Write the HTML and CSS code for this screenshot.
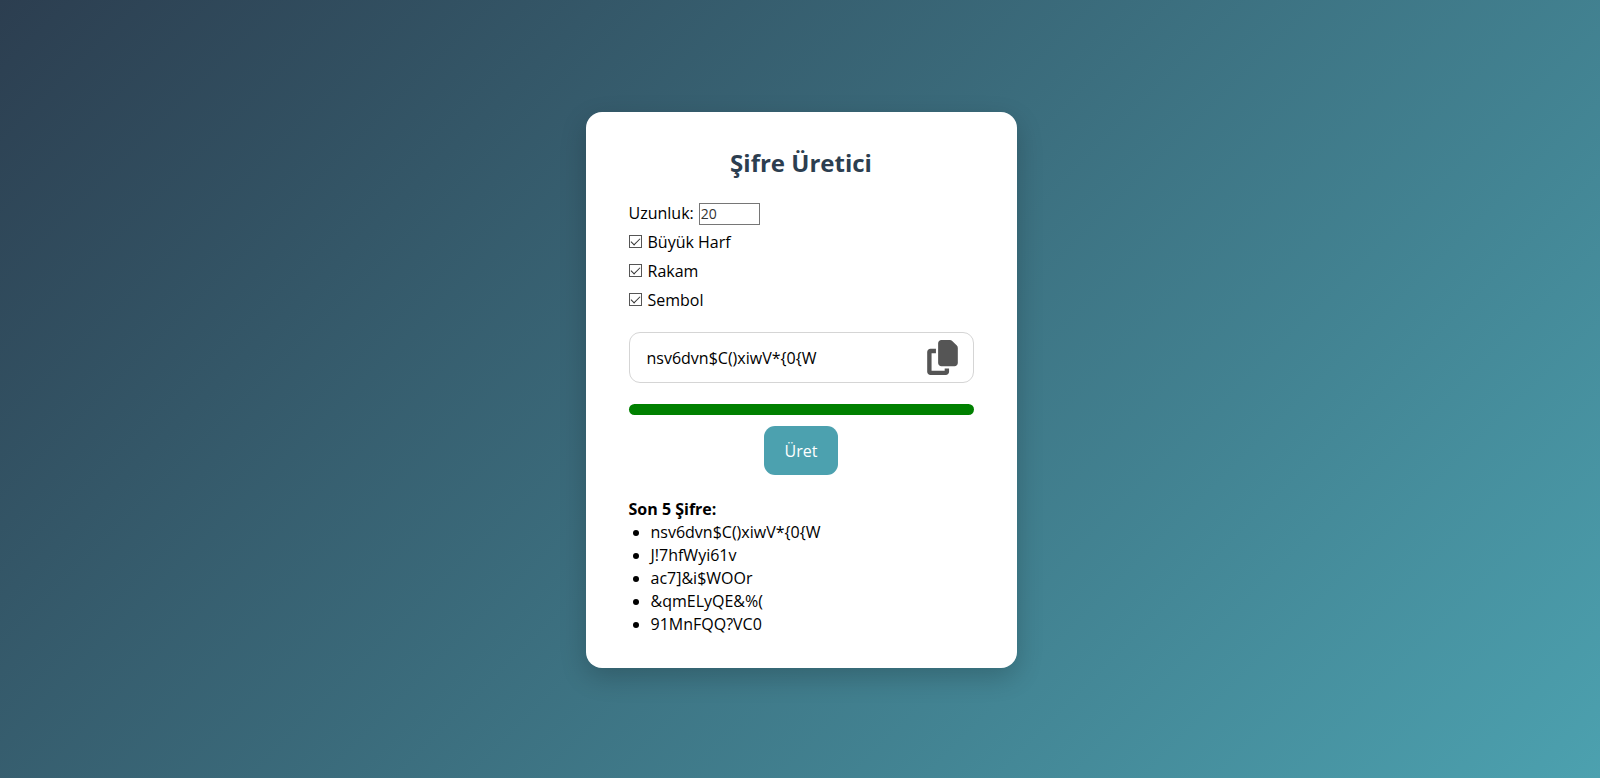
FILE: index.html
```html
<!DOCTYPE html>
<html lang="tr">
<head>
<meta charset="UTF-8">
<meta name="viewport" content="width=device-width, initial-scale=1">
<title>Şifre Üretici</title>
<link rel="stylesheet" href="styles.css">
</head>
<body>
<main class="card">
  <h1 class="title">Şifre Üretici</h1>
  <form class="generator">
    <div class="row">
      <label for="length">Uzunluk:</label>
      <input class="length" type="text" inputmode="numeric" id="length" value="20">
    </div>
    <label class="row"><input class="check" type="checkbox" checked><span>Büyük Harf</span></label>
    <label class="row"><input class="check" type="checkbox" checked><span>Rakam</span></label>
    <label class="row"><input class="check" type="checkbox" checked><span>Sembol</span></label>
    <div class="output">
      <span class="password">nsv6dvn$C()xiwV*{0{W</span>
      <button class="copy" type="button" aria-label="Kopyala">
        <svg class="copy-icon" viewBox="0 0 448 512" aria-hidden="true"><path d="M208 0H332.1c12.7 0 24.9 5.1 33.9 14.1l67.9 67.9c9 9 14.1 21.2 14.1 33.9V336c0 26.5-21.5 48-48 48H208c-26.5 0-48-21.5-48-48V48c0-26.5 21.5-48 48-48zM48 128h80v64H64V448H256V416h64v48c0 26.5-21.5 48-48 48H48c-26.5 0-48-21.5-48-48V176c0-26.5 21.5-48 48-48z"/></svg>
      </button>
    </div>
    <div class="strength"></div>
    <button class="generate" type="button">Üret</button>
  </form>
  <section class="history">
    <h2 class="history-title">Son 5 Şifre:</h2>
    <ul class="history-list">
      <li>nsv6dvn$C()xiwV*{0{W</li>
      <li>J!7hfWyi61v</li>
      <li>ac7]&amp;i$WOOr</li>
      <li>&amp;qmELyQE&amp;%(</li>
      <li>91MnFQQ?VC0</li>
    </ul>
  </section>
</main>
</body>
</html>
```
FILE: styles.css
```css
* {
  box-sizing: border-box;
}

body {
  margin: 0;
  padding: 2px 0 0 2px;
  min-height: 100vh;
  display: flex;
  align-items: center;
  justify-content: center;
  background: linear-gradient(135deg, #2c3e50, #4ca1af);
  color: #000;
  font-family: "Segoe UI", "Open Sans", "Noto Sans", sans-serif;
  font-size: 16px;
  line-height: 23px;
}

.card {
  width: 100%;
  max-width: 431px;
  padding: 32px 43px;
  border-radius: 16px;
  background: #fff;
  box-shadow: 0 9px 27px rgba(0, 0, 0, 0.2);
}

.title {
  margin: 0 0 18px;
  color: #2c3e50;
  font-size: 24px;
  line-height: 37px;
  text-align: center;
}

.generator {
  display: flex;
  flex-direction: column;
}

.row {
  display: flex;
  align-items: center;
  gap: 5px;
  min-height: 29px;
}

.length {
  width: 61px;
  height: 22px;
  padding: 1px;
  border: 1px solid #767676;
  background: #fff;
  color: #333;
  font: inherit;
  font-size: 14px;
}

.check {
  appearance: none;
  flex: none;
  display: grid;
  place-items: center;
  width: 13px;
  height: 13px;
  margin: 0 1px 3px 0;
  border: 1px solid #555;
  background: #fff;
}

.check:checked::before {
  content: "";
  width: 8px;
  height: 4px;
  margin-bottom: 2px;
  border: solid #333;
  border-width: 0 0 1px 1px;
  transform: rotate(-45deg);
}

.output {
  display: flex;
  align-items: center;
  justify-content: space-between;
  min-height: 51px;
  margin: 17px 0 21px;
  padding: 0 15px 0 17px;
  border: 1px solid #d5d5d5;
  border-radius: 11px;
}

.password {
  padding-top: 2px;
}

.copy {
  display: flex;
  padding: 0 0 1px;
  border: 0;
  background: none;
  cursor: pointer;
}

.copy-icon {
  width: 31px;
  height: 35px;
  fill: #555;
}

.strength {
  height: 11px;
  border-radius: 6px;
  background: #008000;
}

.generate {
  align-self: center;
  margin-top: 11px;
  padding: 14px 21px 12px;
  border: 0;
  border-radius: 11px;
  background: #4ca1af;
  color: #fff;
  font: inherit;
  cursor: pointer;
}

.history {
  margin-top: 23px;
}

.history-title {
  margin: 0;
  font-size: 16px;
}

.history-list {
  margin: 0;
  padding-left: 22px;
}
```
